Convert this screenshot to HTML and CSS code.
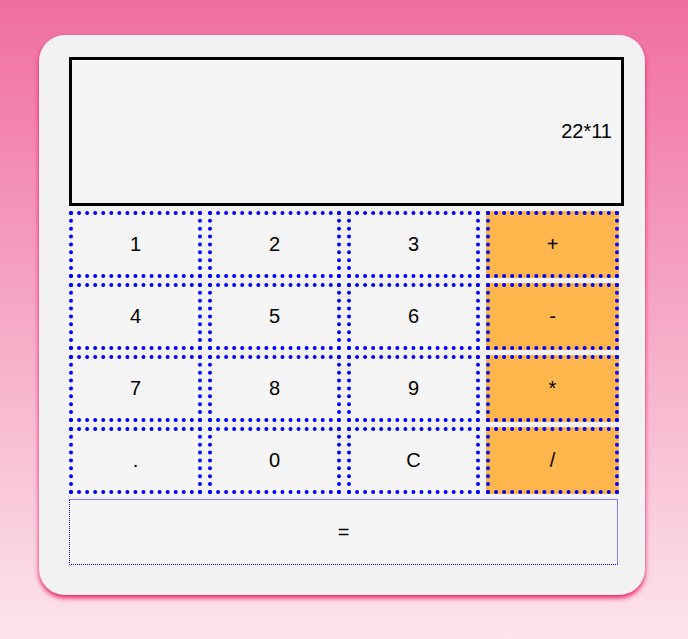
FILE: index.html
```html
<!DOCTYPE html>
<html>
<head>
<meta charset="utf-8">
<link rel="stylesheet" href="styles.css">
</head>
<body>
<div class="calc">
  <div class="display">22*11</div>
  <div class="keys">
    <button class="key">1</button>
    <button class="key">2</button>
    <button class="key">3</button>
    <button class="key op">+</button>
    <button class="key">4</button>
    <button class="key">5</button>
    <button class="key">6</button>
    <button class="key op">-</button>
    <button class="key">7</button>
    <button class="key">8</button>
    <button class="key">9</button>
    <button class="key op">*</button>
    <button class="key">.</button>
    <button class="key">0</button>
    <button class="key">C</button>
    <button class="key op">/</button>
  </div>
  <button class="equals">=</button>
</div>
</body>
</html>
```
FILE: styles.css
```css
html, body {
  margin: 0;
  height: 639px;
}
body {
  background: linear-gradient(to bottom, #f06ea0 0%, #fce4ec 100%);
  font-family: "Liberation Sans", Arial, sans-serif;
  padding-top: 35px;
  box-sizing: border-box;
}
.calc {
  margin-left: 39px;
  width: 606px;
  height: 560px;
  box-sizing: border-box;
  padding: 22px 0 30px 30px;
  background: #f2f2f2;
  border-radius: 26px;
  box-shadow: 0 3px 5px #e91e63;
  display: flex;
  flex-direction: column;
}
.display {
  width: 555px;
  height: 149px;
  flex: none;
  box-sizing: border-box;
  border: 3px solid #000;
  background: #f5f5f5;
  display: flex;
  align-items: center;
  justify-content: flex-end;
  padding-right: 9px;
  font-size: 20px;
  color: #000;
}
.keys {
  margin-top: 5px;
  width: 551px;
  display: grid;
  grid-template-columns: repeat(4, 133px);
  grid-auto-rows: 67px;
  column-gap: 6px;
  row-gap: 5px;
}
.key {
  box-sizing: border-box;
  border: 4px dotted #0000ff;
  background: #f5f5f5;
  font-family: "Liberation Sans", Arial, sans-serif;
  font-size: 20px;
  color: #000;
  padding: 0;
  margin: 0;
}
.key.op {
  background: #ffb74d;
}
.equals {
  margin-top: 5px;
  width: 549px;
  height: 66px;
  flex: none;
  box-sizing: border-box;
  border: 1px dotted #0000ff;
  border-top: 1px solid #8080ff;
  border-right: 1px solid #8080ff;
  background: #f5f5f5;
  font-family: "Liberation Sans", Arial, sans-serif;
  font-size: 20px;
  color: #000;
  padding: 0;
}
```
